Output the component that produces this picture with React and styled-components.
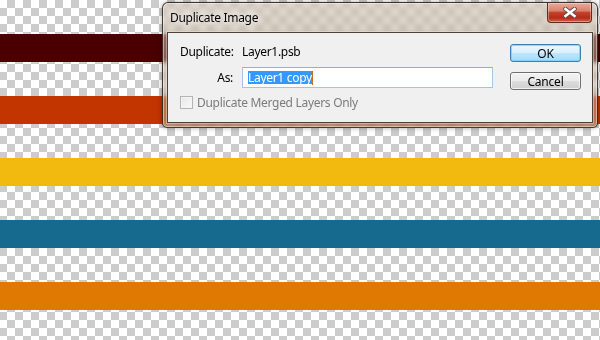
import React from 'react';
import styled, { createGlobalStyle } from 'styled-components';

const Global = createGlobalStyle`
  html, body { margin: 0; padding: 0; }
  body {
    width: 600px;
    height: 340px;
    overflow: hidden;
    font-family: "Noto Sans", "DejaVu Sans", sans-serif;
  }
`;

const Canvas = styled.div`
  position: relative;
  width: 600px;
  height: 340px;
  overflow: hidden;
  background: repeating-conic-gradient(#cccccc 0 25%, #ffffff 0 50%) -1px 0 / 16px 16px;
`;

const Stripes = styled.div`
  display: flex;
  flex-direction: column;
  gap: 34px;
  padding-top: 34px;
`;

const Stripe = styled.div`
  height: 28px;
  background: ${(p) => p.$color};
`;

const Window = styled.div`
  position: absolute;
  left: 162px;
  top: 2px;
  width: 436px;
  height: 126px;
  box-sizing: border-box;
  display: flex;
  flex-direction: column;
  padding: 0 4px 4px;
  border: 1px solid rgba(45, 30, 20, 0.85);
  border-radius: 6px 6px 5px 5px;
  background:
    linear-gradient(to top, rgba(140, 70, 35, 0.45) 0, rgba(170, 100, 60, 0.25) 5px, rgba(170, 100, 60, 0) 7px),
    linear-gradient(to bottom, rgba(255, 255, 255, 0.2), rgba(255, 255, 255, 0) 45%),
    rgba(185, 168, 145, 0.55);
  backdrop-filter: blur(2px);
  box-shadow: inset 0 0 0 1px rgba(255, 255, 255, 0.45), 0 0 5px rgba(0, 0, 0, 0.35);
`;

const TitleBar = styled.div`
  height: 29px;
  flex: none;
  display: flex;
  justify-content: space-between;
  align-items: center;
  padding-left: 3px;
  padding-right: 1px;
`;

const Title = styled.span`
  font-size: 12px;
  letter-spacing: -0.3px;
  color: #000;
  text-shadow: 0 0 6px rgba(255, 255, 255, 0.95), 0 0 10px rgba(255, 255, 255, 0.8);
`;

const CloseButton = styled.div`
  align-self: flex-start;
  width: 45px;
  height: 20px;
  box-sizing: border-box;
  display: flex;
  align-items: center;
  justify-content: center;
  border: 1px solid #5e2a22;
  border-top: none;
  border-radius: 0 0 4px 4px;
  background: linear-gradient(
    to bottom,
    #e8ab9b 0%,
    #d8806b 42%,
    #c6412a 50%,
    #b32e19 78%,
    #d2634b 100%
  );
  box-shadow: inset 0 0 0 1px rgba(255, 255, 255, 0.35);
`;

const Client = styled.div`
  flex: 1;
  display: flex;
  border: 1px solid #4d4138;
  background: #f0f0f0;
  box-shadow: 0 0 0 1px rgba(255, 255, 255, 0.35);
`;

const Form = styled.div`
  flex: 1;
  display: grid;
  grid-template-columns: 53px 251px;
  grid-template-rows: 16px 21px 14px;
  column-gap: 9px;
  row-gap: 7px;
  align-content: start;
  padding: 11px 0 0 12px;
  font-size: 12px;
  letter-spacing: -0.3px;
  color: #000;
`;

const Label = styled.span`
  text-align: right;
  white-space: nowrap;
  align-self: center;
  line-height: 16px;
`;

const Value = styled.span`
  align-self: center;
  line-height: 16px;
  white-space: nowrap;
`;

const Field = styled.div`
  box-sizing: border-box;
  height: 21px;
  display: flex;
  align-items: center;
  padding-left: 5px;
  background: #fff;
  border: 1px solid #a9c3df;
  border-top-color: #8fb0d6;
`;

const Selection = styled.span`
  background: #3399ff;
  color: #fff;
  line-height: 13px;
  white-space: nowrap;
`;

const Caret = styled.span`
  width: 1px;
  height: 14px;
  background: #cc6a1a;
`;

const CheckRow = styled.div`
  grid-column: 1 / -1;
  display: flex;
  align-items: center;
  gap: 4px;
  margin-top: 1px;
  color: #7b7b7b;
  white-space: nowrap;
`;

const CheckBox = styled.span`
  width: 13px;
  height: 13px;
  box-sizing: border-box;
  border: 1px solid #b4b4b4;
  background: linear-gradient(135deg, #e6e6e6, #fbfbfb);
  box-shadow: inset 0 0 0 1px #f4f4f4;
`;

const Buttons = styled.div`
  flex: none;
  width: 71px;
  display: flex;
  flex-direction: column;
  gap: 10px;
  padding-top: 11px;
  margin-right: 11px;
`;

const Button = styled.div`
  height: 18px;
  box-sizing: border-box;
  display: flex;
  align-items: center;
  justify-content: center;
  font-size: 12px;
  letter-spacing: -0.2px;
  color: #000;
  border-radius: 3px;
  border: 1px solid ${(p) => (p.$default ? '#3c7fb1' : '#707070')};
  background: ${(p) =>
    p.$default
      ? 'linear-gradient(to bottom, #eaf6fd 0%, #d9f0fc 50%, #bee6fd 51%, #a7d9f5 100%)'
      : 'linear-gradient(to bottom, #f2f2f2 0%, #ebebeb 50%, #dddddd 51%, #cfcfcf 100%)'};
  box-shadow: inset 0 0 0 1px
    ${(p) => (p.$default ? 'rgba(110, 210, 255, 0.8)' : 'rgba(255, 255, 255, 0.7)')};
`;

const CloseIcon = () => (
  <svg width="14" height="11" viewBox="0 0 14 11">
    <path d="M2.5 2 L11.5 9 M11.5 2 L2.5 9" stroke="#5b4b4b" strokeWidth="4.4" strokeLinecap="square" />
    <path d="M2.5 2 L11.5 9 M11.5 2 L2.5 9" stroke="#ffffff" strokeWidth="2.6" strokeLinecap="square" />
  </svg>
);

const stripes = ['#4a0000', '#c23400', '#f2b90f', '#156a8e', '#df7902'];

export default function App() {
  return (
    <>
      <Global />
      <Canvas>
        <Stripes>
          {stripes.map((c) => (
            <Stripe key={c} $color={c} />
          ))}
        </Stripes>
        <Window>
          <TitleBar>
            <Title>Duplicate Image</Title>
            <CloseButton>
              <CloseIcon />
            </CloseButton>
          </TitleBar>
          <Client>
            <Form>
              <Label>Duplicate:</Label>
              <Value>Layer1.psb</Value>
              <Label>As:</Label>
              <Field>
                <Selection>Layer1 copy</Selection>
                <Caret />
              </Field>
              <CheckRow>
                <CheckBox />
                <span>Duplicate Merged Layers Only</span>
              </CheckRow>
            </Form>
            <Buttons>
              <Button $default>OK</Button>
              <Button>Cancel</Button>
            </Buttons>
          </Client>
        </Window>
      </Canvas>
    </>
  );
}
